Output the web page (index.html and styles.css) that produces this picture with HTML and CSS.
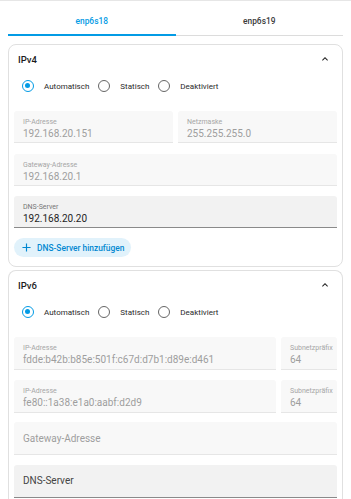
FILE: index.html
```html
<!DOCTYPE html>
<html>
<head>
<meta charset="utf-8">
<link rel="stylesheet" href="styles.css">
</head>
<body>
<div class="page">
  <div class="tabs">
    <div class="tab active">enp6s18</div>
    <div class="tab">enp6s19</div>
  </div>

  <div class="card">
    <div class="card-head">
      <span>IPv4</span>
      <svg class="chev" width="12" height="12" viewBox="0 0 24 24"><path d="M7.41 15.41L12 10.83l4.59 4.58L18 14l-6-6-6 6z" fill="#222"/></svg>
    </div>
    <div class="radios">
      <span class="radio checked"></span><span class="rlabel">Automatisch</span>
      <span class="radio"></span><span class="rlabel">Statisch</span>
      <span class="radio"></span><span class="rlabel">Deaktiviert</span>
    </div>
    <div class="fields v4">
      <div class="row">
        <div class="field disabled grow"><span class="lbl">IP-Adresse</span><span class="val">192.168.20.151</span></div>
        <div class="field disabled grow"><span class="lbl">Netzmaske</span><span class="val">255.255.255.0</span></div>
      </div>
      <div class="field disabled"><span class="lbl">Gateway-Adresse</span><span class="val">192.168.20.1</span></div>
      <div class="field active-field"><span class="lbl">DNS-Server</span><span class="val dark">192.168.20.20</span></div>
    </div>
    <button class="add">
      <svg width="9" height="9" viewBox="0 0 10 10"><path d="M5 0.5v9M0.5 5h9" stroke="#0288d1" stroke-width="1.3"/></svg>
      <span>DNS-Server hinzufügen</span>
    </button>
  </div>

  <div class="card card2">
    <div class="card-head">
      <span>IPv6</span>
      <svg class="chev" width="12" height="12" viewBox="0 0 24 24"><path d="M7.41 15.41L12 10.83l4.59 4.58L18 14l-6-6-6 6z" fill="#222"/></svg>
    </div>
    <div class="radios">
      <span class="radio checked"></span><span class="rlabel">Automatisch</span>
      <span class="radio"></span><span class="rlabel">Statisch</span>
      <span class="radio"></span><span class="rlabel">Deaktiviert</span>
    </div>
    <div class="fields v6">
      <div class="row">
        <div class="field disabled grow"><span class="lbl">IP-Adresse</span><span class="val">fdde:b42b:b85e:501f:c67d:d7b1:d89e:d461</span></div>
        <div class="field disabled prefix"><span class="lbl">Subnetzpräfix</span><span class="val">64</span></div>
      </div>
      <div class="row">
        <div class="field disabled grow"><span class="lbl">IP-Adresse</span><span class="val">fe80::1a38:e1a0:aabf:d2d9</span></div>
        <div class="field disabled prefix"><span class="lbl">Subnetzpräfix</span><span class="val">64</span></div>
      </div>
      <div class="field disabled empty"><span class="ph">Gateway-Adresse</span></div>
      <div class="field active-field empty"><span class="ph dark">DNS-Server</span></div>
    </div>
  </div>
</div>
</body>
</html>
```

FILE: styles.css
```css
* { box-sizing: border-box; }
html, body { margin: 0; padding: 0; background: #fff; }
body {
  font-family: Roboto, "Noto Sans", sans-serif;
  color: #212121;
  width: 351px;
  height: 499px;
  overflow: hidden;
  border-top: 1px solid #e6e6e6;
}
.page { padding: 0 8px; }

.tabs {
  display: flex;
  height: 35px;
  border-bottom: 1px solid #dcdcdc;
}
.tab {
  flex: 1;
  display: flex;
  align-items: center;
  justify-content: center;
  padding-top: 6px;
  font-size: 8.4px;
  font-weight: 500;
  color: #3a3a3a;
}
.tab.active {
  color: #039be5;
  border-bottom: 2px solid #039be5;
  margin-bottom: -1px;
}

.card {
  margin-top: 8px;
  border: 1px solid #e0e0e0;
  border-radius: 8px;
  padding: 0 5px 9px;
}
.card2 { margin-top: 3px; border-bottom-left-radius: 0; border-bottom-right-radius: 0; border-bottom: none; }

.card-head {
  height: 28px;
  display: flex;
  align-items: center;
  justify-content: space-between;
  padding: 0 6px 0 4px;
  font-size: 9.5px;
  font-weight: 500;
  color: #1c1c1c;
}
.chev { margin-top: -1px; }

.radios {
  margin-top: 3px;
  height: 20px;
  display: flex;
  align-items: center;
  padding-left: 8px;
}
.radio {
  width: 12px;
  height: 12px;
  border-radius: 50%;
  border: 1.4px solid #666;
  flex: none;
  position: relative;
}
.radio.checked { border-color: #039be5; }
.radio.checked::after {
  content: "";
  position: absolute;
  left: 2px; top: 2px;
  width: 5.2px; height: 5.2px;
  border-radius: 50%;
  background: #039be5;
}
.rlabel {
  font-size: 8px;
  color: #2a2a2a;
  margin-left: 10px;
  margin-right: 9px;
}

.fields { margin-top: 15px; display: flex; flex-direction: column; }
.fields.v4 { gap: 10.5px; }
.fields.v6 { gap: 9.5px; }
.row { display: flex; gap: 5px; }
.grow { flex: 1; }
.prefix { width: 56px; flex: none; }

.field {
  height: 32px;
  background: #f8f8f8;
  border-radius: 3px 3px 0 0;
  border-bottom: 1px solid #e6e6e6;
  padding: 5px 9px 0;
  display: flex;
  flex-direction: column;
  white-space: nowrap;
  overflow: hidden;
}
.v6 .field { height: 33px; }
.lbl { font-size: 7px; color: #a6a6a6; line-height: 10px; margin-top: 1px; }
.val { font-size: 10px; color: #9e9e9e; line-height: 12px; margin-top: 1px; }
.val.dark { color: #1f1f1f; }
.active-field { background: #f2f2f2; border-bottom: 1.5px solid #8a8a8a; }
.active-field .lbl { color: #777; }

.field.empty { justify-content: center; padding-top: 0; }
.ph { font-size: 10px; color: #9e9e9e; }
.ph.dark { color: #444; }

.add {
  margin-top: 10px;
  height: 19px;
  border: none;
  border-radius: 10px;
  background: #e1f2fb;
  display: flex;
  align-items: center;
  gap: 6px;
  padding: 0 7px 0 8px;
  font-family: Roboto, sans-serif;
  font-size: 8.4px;
  font-weight: 500;
  color: #0288d1;
}
```
